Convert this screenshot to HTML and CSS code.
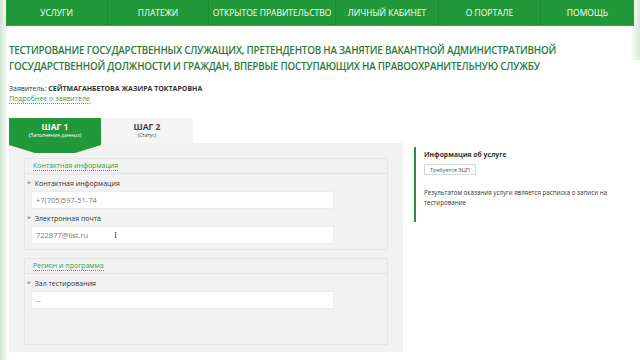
FILE: index.html
```html
<!DOCTYPE html>
<html lang="ru">
<head>
  <meta charset="UTF-8" />
  <meta name="viewport" content="width=device-width, initial-scale=1.0" />
  <title>Тестирование государственных служащих</title>
  <link rel="stylesheet" href="styles.css">
</head>
<body>
  <div class="page">
    <nav class="topnav">
      <a href="#">Услуги</a>
      <a href="#">Платежи</a>
      <a href="#" class="wide">Открытое правительство</a>
      <a href="#">Личный кабинет</a>
      <a href="#">О портале</a>
      <a href="#">Помощь</a>
    </nav>

    <h1 class="title">Тестирование государственных служащих, претендентов на занятие вакантной административной государственной должности и граждан, впервые поступающих на правоохранительную службу</h1>

    <div class="applicant">
      <div>Заявитель: <b>СЕЙТМАГАНБЕТОВА ЖАЗИРА ТОКТАРОВНА</b></div>
      <a href="#" class="dotted">Подробнее о заявителе</a>
    </div>

    <div class="content">
      <div class="main">
        <div class="tabs">
          <div class="tab active">
            <div class="tab-title">ШАГ 1</div>
            <div class="tab-sub">(Заполнение данных)</div>
          </div>
          <div class="tab">
            <div class="tab-title">ШАГ 2</div>
            <div class="tab-sub">(Статус)</div>
          </div>
        </div>

        <div class="panel">
          <fieldset class="group">
            <div class="legend"><a href="#" class="dotted">Контактная информация</a></div>
            <div class="field">
              <label><span class="req">*</span> Контактная информация</label>
              <div class="input">+7(705)597-51-74</div>
            </div>
            <div class="field">
              <label><span class="req">*</span> Электронная почта</label>
              <div class="input">722877@list.ru <span class="cursor">I</span></div>
            </div>
          </fieldset>

          <fieldset class="group tall">
            <div class="legend"><a href="#" class="dotted">Регион и программа</a></div>
            <div class="field">
              <label><span class="req">*</span> Зал тестирования</label>
              <div class="input">--</div>
            </div>
          </fieldset>
        </div>
      </div>

      <aside class="info">
        <h4>Информация об услуге</h4>
        <span class="badge">Требуется ЭЦП</span>
        <p>Результатом оказания услуги является расписка о записи на тестирование</p>
      </aside>
    </div>
  </div>
</body>
</html>
```

FILE: styles.css
```css
body {
  margin: 0;
  font-family: "Open Sans", "Noto Sans", sans-serif;
  background-color: #fff;
  color: #333;
  width: 640px;
  height: 360px;
  overflow: hidden;
}
.page {
  position: relative;
  padding: 0 6px 0 6px;
  height: 360px;
  box-sizing: border-box;
  background:
    linear-gradient(90deg, rgba(120, 180, 130, 0.35), rgba(255, 255, 255, 0) 8px),
    linear-gradient(270deg, rgba(120, 180, 130, 0.3), rgba(255, 255, 255, 0) 10px) right top / 100% 60px no-repeat;
}
a {
  text-decoration: none;
}
.topnav {
  display: flex;
  height: 25px;
  background-color: #21993a;
  border-bottom: 1px solid #2aa744;
}
.topnav a {
  flex: 101px 0 0;
  display: flex;
  align-items: center;
  justify-content: center;
  color: #fff;
  font-size: 8.5px;
  text-transform: uppercase;
  border-right: 1px solid #1b8a32;
}
.topnav a.wide {
  flex-basis: 126px;
}
.topnav a:nth-child(1) {
  flex-basis: 101px;
}
.topnav a:nth-child(2) {
  flex-basis: 100px;
}
.topnav a:nth-child(4) {
  flex-basis: 102px;
}
.topnav a:last-child {
  flex: 1;
  border-right: none;
}
.title {
  margin: 17px 0 0 3px;
  font-size: 9.8px;
  line-height: 16px;
  font-weight: 600;
  color: #2a7b3a;
  text-transform: uppercase;
  letter-spacing: -0.2px;
}
.applicant {
  margin: 9px 0 0 3px;
  font-size: 7px;
  line-height: 10px;
  color: #333;
}
.applicant b {
  font-weight: 700;
}
.dotted {
  color: #3a9a4c;
  border-bottom: 1px dotted #4aa85a;
}
.content {
  display: flex;
  margin-top: 14px;
  margin-left: 3px;
}
.main {
  width: 394px;
}
.tabs {
  display: flex;
  height: 25px;
}
.tab {
  width: 92px;
  background-color: #f5f5f5;
  text-align: center;
  color: #444;
  padding-top: 4px;
  box-sizing: border-box;
}
.tab.active {
  background-color: #21993a;
  color: #fff;
  height: 35px;
  clip-path: polygon(0 0, 100% 0, 100% 27px, 72% 35px, 28% 35px, 0 27px);
  position: relative;
  z-index: 1;
}
.tab-title {
  font-size: 8.5px;
  font-weight: 700;
  line-height: 10px;
}
.tab-sub {
  font-size: 5px;
  line-height: 7px;
}
.panel {
  background-color: #f2f2f2;
  padding: 15px 15px 9px 15px;
  height: 209px;
  box-sizing: border-box;
}
.group {
  margin: 0 0 8px 0;
  padding: 0 0 5px 0;
  border: 1px solid #e6e6e6;
  min-width: 0;
}
.group.tall {
  height: 87px;
  box-sizing: border-box;
}
.legend {
  height: 15px;
  padding: 2px 0 0 8px;
  box-sizing: border-box;
  border-bottom: 1px solid #e4e4e4;
  font-size: 7px;
  line-height: 9px;
}
.field label {
  display: block;
  font-size: 7px;
  line-height: 9px;
  padding: 5px 0 0 2px;
  color: #333;
}
.req {
  color: #777;
  margin-right: 2px;
}
.input {
  margin: 3px 0 0 6px;
  width: 303px;
  height: 18px;
  background-color: #fff;
  border: 1px solid #ececec;
  box-sizing: border-box;
  font-size: 7.5px;
  line-height: 16px;
  padding-left: 4px;
  color: #777;
}
.cursor {
  margin-left: 24px;
  font-family: "Liberation Serif", serif;
  font-size: 9px;
  color: #444;
}
.info {
  margin: 29px 0 0 11px;
  height: 75px;
  border-left: 2px solid #2f8f3e;
  padding: 3px 0 0 8px;
  box-sizing: border-box;
  font-size: 6.2px;
  color: #333;
}
.info h4 {
  margin: 0;
  font-size: 6.8px;
  line-height: 10px;
  font-weight: 700;
}
.badge {
  display: inline-block;
  margin-top: 4px;
  padding: 0 5px;
  height: 11px;
  line-height: 10px;
  border: 1px solid #cfd8de;
  font-size: 5.5px;
  box-sizing: border-box;
  color: #555;
}
.info p {
  margin: 13px 0 0 0;
  line-height: 10px;
  width: 205px;
}
```
